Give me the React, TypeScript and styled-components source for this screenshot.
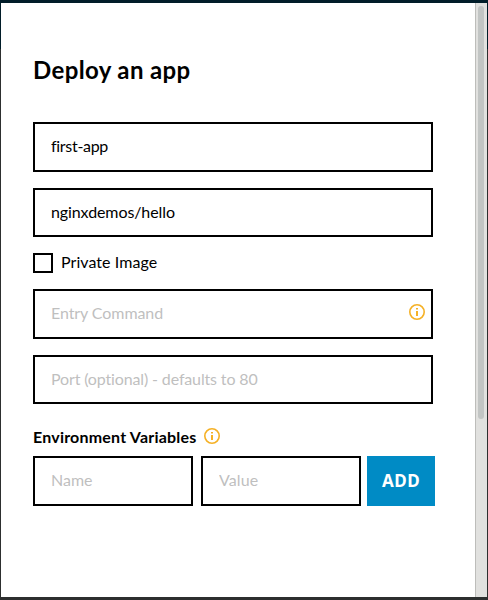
import React from 'react';
import styled, { createGlobalStyle } from 'styled-components';

const GlobalStyle = createGlobalStyle`
  * { box-sizing: border-box; }
  body {
    margin: 0;
    font-family: Lato, "Open Sans", sans-serif;
    font-size: 16px;
    font-variant-ligatures: none;
    color: #000;
  }
`;

const Backdrop = styled.div`
  height: 600px;
  padding: 3px 1px;
  background: linear-gradient(#011d29 0 49px, #2d2f2f 49px);
`;

const Dialog = styled.main`
  display: flex;
  height: 594px;
  background: #fff;
`;

const Form = styled.form`
  flex: 1;
  padding: 51px 0 0 32px;
`;

const Title = styled.h1`
  margin: 0 0 36px;
  height: 32px;
  line-height: 32px;
  font-size: 24px;
  font-weight: 700;
  letter-spacing: 0.37px;
`;

const Field = styled.div<{ $width: number; $height: number; $gap?: number }>`
  display: flex;
  align-items: center;
  width: ${(p) => p.$width}px;
  height: ${(p) => p.$height}px;
  margin-bottom: ${(p) => p.$gap ?? 0}px;
  padding: 0 6px 0 16px;
  border: 2px solid #000;
`;

const Input = styled.input<{ $spacing?: number; $lift?: number }>`
  flex: 1;
  min-width: 0;
  height: 100%;
  padding: 0 0 ${(p) => p.$lift ?? 3}px;
  border: 0;
  outline: 0;
  background: transparent;
  color: #000;
  font: inherit;
  font-variant-ligatures: none;
  letter-spacing: ${(p) => p.$spacing ?? 0}px;
  &::placeholder { color: #bfbfbf; opacity: 1; }
`;

const CheckRow = styled.label`
  display: flex;
  align-items: center;
  gap: 8px;
  height: 20px;
  margin-bottom: 16px;
`;

const CheckText = styled.span`
  padding-bottom: 3px;
  letter-spacing: 0.06px;
`;

const Checkbox = styled.input`
  appearance: none;
  width: 20px;
  height: 20px;
  margin: 0;
  border: 2px solid #000;
`;

const SectionHead = styled.div`
  display: flex;
  gap: 8px;
  height: 28px;
`;

const SectionTitle = styled.h2`
  margin: 0;
  font-size: 16px;
  line-height: 18px;
  font-weight: 700;
  letter-spacing: 0.2px;
`;

const VariableRow = styled.div`
  display: flex;
  gap: 8px;
`;

const AddButton = styled.button`
  width: 68px;
  height: 50px;
  margin-left: -2px;
  padding: 0;
  border: 0;
  background: #008bc5;
  color: #fff;
  font: 700 17px/50px "Noto Sans", sans-serif;
  letter-spacing: 0.5px;
`;

const Icon = styled.svg<{ $raised?: boolean }>`
  flex: none;
  width: 16px;
  height: 16px;
  margin-bottom: ${(p) => (p.$raised ? 4 : 0)}px;
`;

const Scrollbar = styled.div`
  width: 12px;
  padding: 3px 2px;
  border-left: 1px solid #bdbdba;
  background: #e1e1df;
`;

const Thumb = styled.div`
  width: 6px;
  height: 413px;
  border-radius: 3px;
  background: #c2c5c4;
`;

const InfoIcon = ({ raised }: { raised?: boolean }) => (
  <Icon viewBox="0 0 16 16" $raised={raised} aria-label="Info">
    <circle cx="8" cy="8" r="7.2" fill="none" stroke="#f5b126" strokeWidth="1.6" />
    <path d="M7 4h2v1.6H7zM7 7h2v5H7z" fill="#f5b126" />
  </Icon>
);

export default function App() {
  return (
    <>
      <GlobalStyle />
      <Backdrop>
        <Dialog>
          <Form onSubmit={(e) => e.preventDefault()}>
            <Title>Deploy an app</Title>
            <Field $width={400} $height={50} $gap={16}>
              <Input defaultValue="first-app" spellCheck={false} $spacing={-0.3} />
            </Field>
            <Field $width={400} $height={49} $gap={16}>
              <Input defaultValue="nginxdemos/hello" spellCheck={false} $spacing={-0.1} />
            </Field>
            <CheckRow>
              <Checkbox type="checkbox" />
              <CheckText>Private Image</CheckText>
            </CheckRow>
            <Field $width={400} $height={50} $gap={16}>
              <Input placeholder="Entry Command" $spacing={-0.08} />
              <InfoIcon raised />
            </Field>
            <Field $width={400} $height={49} $gap={24}>
              <Input placeholder="Port (optional) - defaults to 80" $spacing={-0.14} $lift={2} />
            </Field>
            <SectionHead>
              <SectionTitle>Environment Variables</SectionTitle>
              <InfoIcon />
            </SectionHead>
            <VariableRow>
              <Field $width={160} $height={50}>
                <Input placeholder="Name" />
              </Field>
              <Field $width={160} $height={50}>
                <Input placeholder="Value" $spacing={0.1} />
              </Field>
              <AddButton type="button">ADD</AddButton>
            </VariableRow>
          </Form>
          <Scrollbar>
            <Thumb />
          </Scrollbar>
        </Dialog>
      </Backdrop>
    </>
  );
}
